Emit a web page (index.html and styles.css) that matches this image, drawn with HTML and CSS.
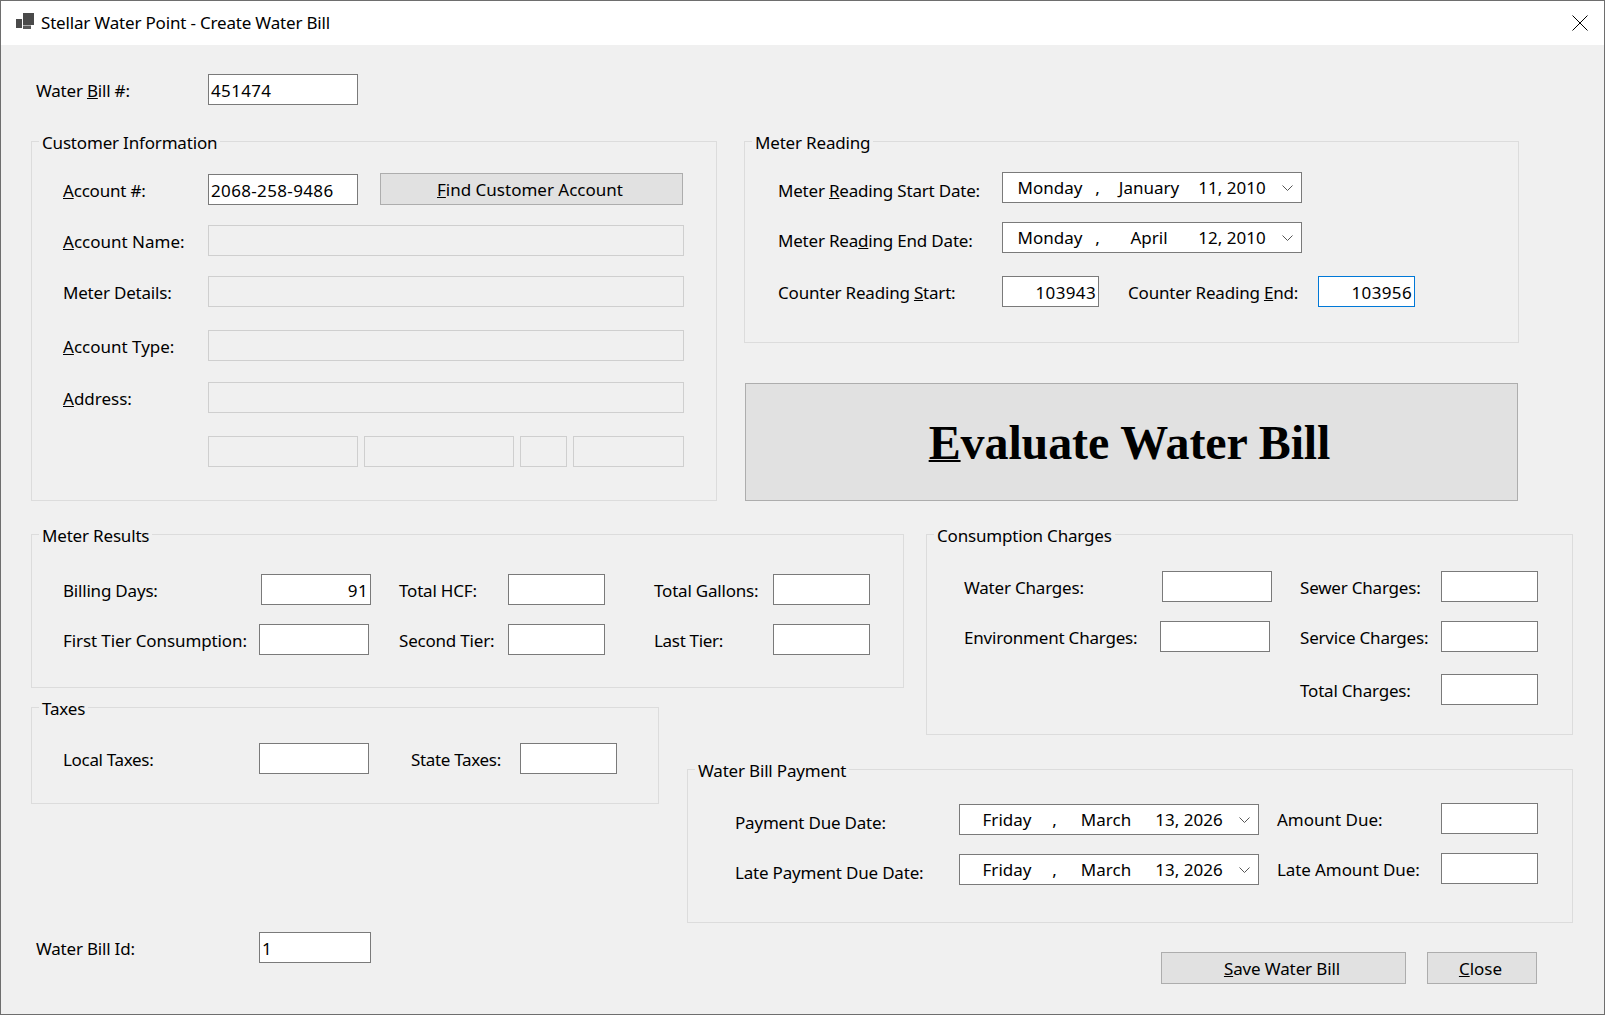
FILE: index.html
```html
<!DOCTYPE html>
<html lang="en">
<head>
<meta charset="utf-8">
<title>Stellar Water Point - Create Water Bill</title>
<link rel="stylesheet" href="styles.css">
</head>
<body>
<div class="window">
  <header class="titlebar">
    <svg class="app-icon" viewBox="0 0 18 16" width="18" height="16" aria-hidden="true">
      <rect x="7" y="0" width="11" height="12" fill="#4a4a4a"/>
      <rect x="0" y="6" width="6" height="9" fill="#4a4a4a"/>
      <rect x="7" y="12.5" width="8" height="3.5" fill="#5a5a5a"/>
    </svg>
    <span class="title">Stellar Water Point - Create Water Bill</span>
    <svg class="close-x" viewBox="0 0 16 16" width="16" height="16" aria-hidden="true">
      <path d="M0.5 0.5L15.5 15.5M15.5 0.5L0.5 15.5" stroke="#000" stroke-width="1" fill="none"/>
    </svg>
  </header>

  <main class="form">
    <div class="head-row">
      <span class="label col-head">Water <u>B</u>ill #:</span>
      <div class="field w150">451474</div>
    </div>

    <div class="upper">
      <section class="group customer">
        <div class="legend">Customer Information</div>
        <div class="grid customer-grid">
          <span class="label"><u>A</u>ccount #:</span>
          <div class="inline">
            <div class="field w150">2068-258-9486</div>
            <button class="btn find"><u>F</u>ind Customer Account</button>
          </div>
          <span class="label loose"><u>A</u>ccount Name:</span>
          <div class="field off"></div>
          <span class="label">Meter Details:</span>
          <div class="field off"></div>
          <span class="label loose"><u>A</u>ccount Type:</span>
          <div class="field off"></div>
          <span class="label loose"><u>A</u>ddress:</span>
          <div class="field off"></div>
          <span></span>
          <div class="inline tight">
            <div class="field off w150"></div>
            <div class="field off w150"></div>
            <div class="field off w47"></div>
            <div class="field off w111"></div>
          </div>
        </div>
      </section>

      <div class="upper-right">
        <section class="group meter">
          <div class="legend">Meter Reading</div>
          <div class="grid meter-grid">
            <span class="label low">Meter <u>R</u>eading Start Date:</span>
            <div class="date">
              <span class="d-day">Monday</span><span class="d-comma">,</span><span class="d-month">January</span><span class="d-num">11, 2010</span>
              <svg class="chev" viewBox="0 0 11 6" width="11" height="6" aria-hidden="true"><path d="M0.5 0.5L5.5 5.5L10.5 0.5" fill="none" stroke="#555" stroke-width="1"/></svg>
            </div>
            <span class="label low">Meter Rea<u>d</u>ing End Date:</span>
            <div class="date">
              <span class="d-day">Monday</span><span class="d-comma">,</span><span class="d-month">April</span><span class="d-num">12, 2010</span>
              <svg class="chev" viewBox="0 0 11 6" width="11" height="6" aria-hidden="true"><path d="M0.5 0.5L5.5 5.5L10.5 0.5" fill="none" stroke="#555" stroke-width="1"/></svg>
            </div>
            <span class="label">Counter Reading <u>S</u>tart:</span>
            <div class="inline">
              <div class="field w97 num">103943</div>
              <span class="label col-end">Counter Reading <u>E</u>nd:</span>
              <div class="field w97 num focus">103956</div>
            </div>
          </div>
        </section>
        <button class="btn evaluate"><u>E</u>valuate Water Bill</button>
      </div>
    </div>

    <div class="lower">
      <section class="group results">
        <div class="legend">Meter Results</div>
        <div class="grid results-grid">
          <span class="label">Billing Days:</span>
          <div class="field w110 nudge num">91</div>
          <span class="label">Total HCF:</span>
          <div class="field w97"></div>
          <span class="label">Total Gallons:</span>
          <div class="field w97"></div>
          <span class="label mid">First Tier Consumption:</span>
          <div class="field w110"></div>
          <span class="label">Second Tier:</span>
          <div class="field w97"></div>
          <span class="label tight-text">Last Tier:</span>
          <div class="field w97"></div>
        </div>
      </section>

      <section class="group charges">
        <div class="legend">Consumption Charges</div>
        <div class="grid charges-grid">
          <span class="label">Water Charges:</span>
          <div class="field w110 nudge"></div>
          <span class="label">Sewer Charges:</span>
          <div class="field w97"></div>
          <span class="label">Environment Charges:</span>
          <div class="field w110"></div>
          <span class="label">Service Charges:</span>
          <div class="field w97"></div>
          <span></span>
          <span></span>
          <span class="label">Total Charges:</span>
          <div class="field w97"></div>
        </div>
      </section>

      <section class="group taxes">
        <div class="legend">Taxes</div>
        <div class="grid taxes-grid">
          <span class="label tight-text">Local Taxes:</span>
          <div class="field w110"></div>
          <span class="label tight-text">State Taxes:</span>
          <div class="field w97"></div>
        </div>
      </section>

      <section class="group payment">
        <div class="legend">Water Bill Payment</div>
        <div class="grid payment-grid">
          <span class="label low">Payment Due Date:</span>
          <div class="date drop">
            <span class="d-day">Friday</span><span class="d-comma">,</span><span class="d-month">March</span><span class="d-num">13, 2026</span>
            <svg class="chev" viewBox="0 0 11 6" width="11" height="6" aria-hidden="true"><path d="M0.5 0.5L5.5 5.5L10.5 0.5" fill="none" stroke="#555" stroke-width="1"/></svg>
          </div>
          <span class="label loose">Amount Due:</span>
          <div class="field w97"></div>
          <span class="label low">Late Payment Due Date:</span>
          <div class="date drop">
            <span class="d-day">Friday</span><span class="d-comma">,</span><span class="d-month">March</span><span class="d-num">13, 2026</span>
            <svg class="chev" viewBox="0 0 11 6" width="11" height="6" aria-hidden="true"><path d="M0.5 0.5L5.5 5.5L10.5 0.5" fill="none" stroke="#555" stroke-width="1"/></svg>
          </div>
          <span class="label mid">Late Amount Due:</span>
          <div class="field w97"></div>
        </div>
      </section>
    </div>

    <div class="bottom">
      <span class="label col-id">Water Bill Id:</span>
      <div class="field w112">1</div>
      <div class="actions">
        <button class="btn save"><u>S</u>ave Water Bill</button>
        <button class="btn close"><u>C</u>lose</button>
      </div>
    </div>
  </main>
</div>
</body>
</html>
```

FILE: styles.css
```css
* { box-sizing: border-box; }

html, body {
  margin: 0;
  padding: 0;
  background: #f0f0f0;
}

body {
  font-family: "Noto Sans", "Open Sans", sans-serif;
  font-size: 17px;
  color: #000;
  overflow: hidden;
}

.window {
  width: 1605px;
  height: 1015px;
  border: 1px solid #6e6e6e;
  display: flex;
  flex-direction: column;
  background: #f0f0f0;
}

.titlebar {
  height: 44px;
  flex: none;
  background: #fff;
  display: flex;
  align-items: center;
  padding: 0 16px 0 15px;
}

.app-icon { flex: none; margin: -4px 7px 0 0; }
.title { line-height: 46px; letter-spacing: -0.18px; }
.close-x { margin-left: auto; flex: none; }

.form {
  flex: 1;
  padding: 29px 0 0 30px;
}

.label {
  display: block;
  height: 31px;
  line-height: 31px;
  padding-top: 1px;
  white-space: nowrap;
  letter-spacing: -0.2px;
}
.label.low { padding-top: 4px; }
.meter .label.low { padding-top: 3px; }
.label.loose { letter-spacing: 0; }
.label.mid { letter-spacing: -0.1px; }
.label.tight-text { letter-spacing: -0.32px; }

.field {
  height: 31px;
  line-height: 31px;
  padding: 0 2px;
  background: #fff;
  border: 1px solid #7a7a7a;
  white-space: nowrap;
  letter-spacing: 0.35px;
}
.field.off { background: #f0f0f0; border-color: #cfcfcf; }
.field.focus { border-color: #0078d7; }
.field.num { text-align: right; }
.field.nudge { margin-left: 2px; }

.w47 { width: 47px; }
.w97 { width: 97px; }
.w110 { width: 110px; }
.w111 { width: 111px; }
.w112 { width: 112px; }
.w150 { width: 150px; }

.head-row { display: flex; margin-left: 5px; }
.col-head { width: 172px; }

.upper { display: flex; margin-top: 36px; gap: 27px; }
.upper-right { width: 775px; display: flex; flex-direction: column; }

.group {
  border: 1px solid #dcdcdc;
  background: #f0f0f0;
}

.legend {
  width: fit-content;
  height: 24px;
  line-height: 24px;
  margin: -11px 0 -13px 7px;
  padding: 0 3px;
  background: #f0f0f0;
  white-space: nowrap;
  letter-spacing: -0.18px;
}

.grid { display: grid; align-items: start; justify-items: start; }

.inline { display: flex; align-items: flex-start; }
.inline.tight { gap: 6px; }

.customer { width: 686px; height: 360px; }
.customer-grid {
  padding: 32px 0 0 31px;
  grid-template-columns: 145px 476px;
  grid-template-rows: 51px 51px 54px 52px 54px 31px;
}
.customer-grid > .field { width: 476px; }

.btn {
  font: inherit;
  color: #000;
  background: #e1e1e1;
  border: 1px solid #adadad;
  padding: 0 3px 0 0;
  cursor: default;
}
.find { width: 303px; height: 32px; margin: -1px 0 0 22px; }

.meter { height: 202px; }
.meter-grid {
  padding: 30px 0 0 33px;
  grid-template-columns: 224px 1fr;
  grid-template-rows: 50px 54px 31px;
}
.col-end { width: 190px; margin-left: 29px; }

.date {
  width: 300px;
  height: 31px;
  line-height: 29px;
  background: #fff;
  border: 1px solid #7a7a7a;
  padding-left: 14px;
  display: flex;
  align-items: flex-start;
  white-space: nowrap;
}
.date.drop { margin-top: 1px; }
.d-day { width: 66px; text-align: center; }
.d-comma { width: 29px; text-align: center; }
.d-month { width: 74px; text-align: center; }
.d-num { width: 68px; margin-left: 12px; text-align: center; }
.chev { flex: none; margin: 12px 0 0 16px; }

.evaluate {
  width: 773px;
  height: 118px;
  margin: 40px 0 0 1px;
  padding-right: 4px;
  font-family: "Liberation Serif", "Times New Roman", serif;
  font-weight: 700;
  font-size: 48px;
  letter-spacing: -0.1px;
}
.evaluate u { text-decoration-thickness: 2px; }

.lower {
  display: grid;
  margin-top: 33px;
  grid-template-columns: 628px 28px 217px 22px 647px;
  grid-template-rows: 153px 20px 27px 35px 34px 119px;
}
.lower .group { margin-bottom: -1px; }

.results { grid-column: 1 / 4; grid-row: 1; }
.charges { grid-column: 5; grid-row: 1 / 4; }
.taxes { grid-column: 1; grid-row: 3 / 6; }
.payment { grid-column: 3 / 6; grid-row: 5 / 7; }

.results-grid {
  padding: 39px 0 0 31px;
  grid-template-columns: 196px 140px 109px 146px 119px 97px;
  grid-template-rows: 50px 31px;
}

.charges-grid {
  padding: 36px 0 0 37px;
  grid-template-columns: 196px 140px 141px 97px;
  grid-template-rows: 50px 53px 31px;
}

.taxes-grid {
  padding: 35px 0 0 31px;
  grid-template-columns: 196px 152px 109px 97px;
}

.payment-grid {
  padding: 33px 0 0 47px;
  grid-template-columns: 224px 318px 164px 97px;
  grid-template-rows: 50px 31px;
}

.bottom {
  display: flex;
  align-items: flex-start;
  width: 1501px;
  margin: 10px 0 0 5px;
}
.col-id { width: 223px; }

.actions { margin: 20px 0 0 auto; display: flex; gap: 21px; }
.save { width: 245px; height: 32px; letter-spacing: -0.12px; }
.close { width: 110px; height: 32px; }
```
